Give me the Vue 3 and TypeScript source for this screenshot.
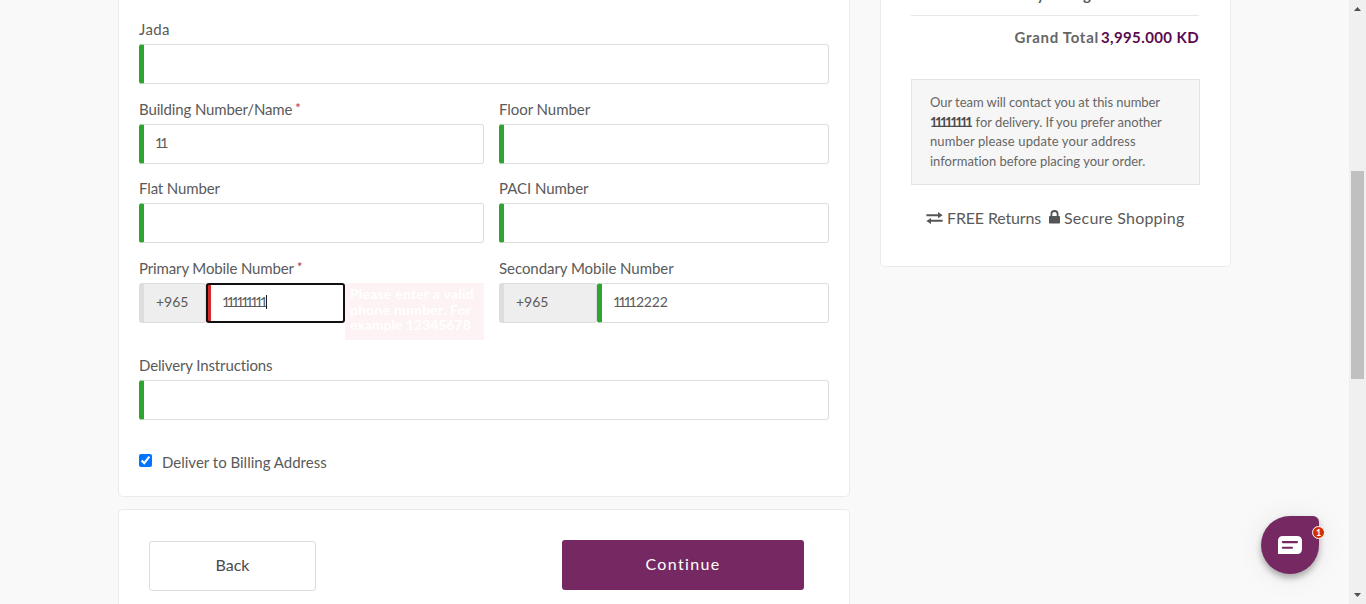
<script setup lang="ts">
interface Field {
  id: string
  label: string
  value: string
  required?: boolean
}

const rows: Field[][] = [
  [
    { id: 'building', label: 'Building Number/Name', value: '11', required: true },
    { id: 'floor', label: 'Floor Number', value: '' },
  ],
  [
    { id: 'flat', label: 'Flat Number', value: '' },
    { id: 'paci', label: 'PACI Number', value: '' },
  ],
]
</script>

<template>
  <div class="page">
    <main class="content">
      <div class="left">
        <section class="card form">
          <div class="field jada">
            <label class="label"><span class="t-jada">Jada</span></label>
            <div class="input"></div>
          </div>
          <div v-for="(row, i) in rows" :key="i" class="row" :class="'row-' + i">
            <div v-for="f in row" :key="f.id" class="field">
              <label class="label"><span :class="'t-' + f.id">{{ f.label }}</span><i v-if="f.required" class="req">*</i></label>
              <div class="input"><span class="ones">{{ f.value }}</span></div>
            </div>
          </div>
          <div class="row phones">
            <div class="field">
              <label class="label"><span class="t-primary">Primary Mobile Number</span><i class="req">*</i></label>
              <div class="phone">
                <div class="input prefix short">+965</div>
                <div class="input focused"><span class="ones many">111111111</span><span class="caret"></span></div>
                <div class="error">
                  <div class="e1">Please enter a valid</div>
                  <div class="e2">phone number. For</div>
                  <div class="e3">example 12345678</div>
                </div>
              </div>
            </div>
            <div class="field">
              <label class="label"><span class="t-secondary">Secondary Mobile Number</span></label>
              <div class="phone">
                <div class="input prefix long">+965</div>
                <div class="input second"><span class="ones">1111</span><span>2222</span></div>
              </div>
            </div>
          </div>
          <div class="field">
            <label class="label"><span class="t-delivery">Delivery Instructions</span></label>
            <div class="input"></div>
          </div>
          <label class="check">
            <input type="checkbox" checked />
            <span>Deliver to Billing Address</span>
          </label>
        </section>
        <section class="card actions">
          <button class="back">Back</button>
          <button class="continue">Continue</button>
        </section>
      </div>

      <aside class="card summary">
        <div class="charge">Delivery Charge</div>
        <div class="total"><span class="gt">Grand Total</span><span class="amount">3,995.000 KD</span></div>
        <div class="notice">
          <div class="n1">Our team will contact you at this number</div>
          <div class="n2"><b>11111111</b> for delivery. If you prefer another</div>
          <div class="n3">number please update your address</div>
          <div class="n4">information before placing your order.</div>
        </div>
        <div class="perks">
          <svg class="arrows" width="17" height="12" viewBox="0 0 17 12">
            <path d="M0.4 2.2H12V0L16.6 3.2 12 6.2V4.2H0.4ZM16.6 7.8H5V5.9L0.4 8.9 5 12V9.8H16.6Z" fill="#555" />
          </svg>
          <span class="free">FREE Returns</span>
          <svg class="lock" width="11" height="14" viewBox="0 0 11 14">
            <path d="M2.4 6.5V4.1a3.1 3.1 0 0 1 6.2 0V6.5" fill="none" stroke="#555" stroke-width="1.8" />
            <rect x="0" y="6" width="11" height="7.6" rx="0.8" fill="#555" />
          </svg>
          <span class="secure">Secure Shopping</span>
        </div>
      </aside>
    </main>

    <div class="scrollbar">
      <svg width="7" height="4" viewBox="0 0 7 4"><path d="M3.5 0L7 4H0Z" fill="#505050" /></svg>
      <div class="thumb"></div>
      <svg width="7" height="4" viewBox="0 0 7 4"><path d="M0 0H7L3.5 4Z" fill="#505050" /></svg>
    </div>

    <div class="chat">
      <svg width="24" height="18" viewBox="0 0 24 18">
        <path d="M5 0H19Q24 0 24 5V13Q24 18 19 18H0V5Q0 0 5 0Z" fill="#fff" />
        <path d="M4.8 6.1H19M4.8 11.7H14" stroke="#762863" stroke-width="2.1" stroke-linecap="round" />
      </svg>
      <span class="badge">1</span>
    </div>
  </div>
</template>

<style>
html,
body {
  margin: 0;
  overflow: hidden;
}
</style>

<style scoped>
* {
  box-sizing: border-box;
}
.page {
  position: relative;
  display: flex;
  justify-content: space-between;
  width: 1366px;
  height: 604px;
  overflow: hidden;
  background: #f9f9f9;
  color: #5a5a5a;
  font-family: Lato, 'Open Sans', sans-serif;
  font-size: 15px;
  font-variant-ligatures: none;
}
.content {
  display: flex;
  align-items: flex-start;
  gap: 30px;
  padding-left: 118px;
}
.left {
  display: flex;
  flex-direction: column;
  gap: 12px;
  width: 732px;
}
.card {
  background: #fff;
  border: 1px solid #ebebeb;
  border-radius: 5px;
}
.form {
  height: 497px;
  border-top: 0;
  border-radius: 0 0 5px 5px;
  padding: 19px 20px 0;
}
.jada {
  margin-bottom: 15px;
}
.row {
  display: grid;
  grid-template-columns: 345px 330px;
  column-gap: 15px;
}
.row-0 {
  margin-bottom: 14px;
}
.row-1 {
  margin-bottom: 15px;
}
.phones {
  height: 97px;
}
.label {
  display: flex;
  height: 20px;
  margin-bottom: 5px;
  line-height: 20px;
  white-space: nowrap;
}
.t-jada {
  letter-spacing: 0.4px;
}
.t-building,
.t-primary,
.t-flat,
.t-delivery {
  letter-spacing: -0.13px;
}
.t-floor,
.t-paci,
.t-secondary {
  letter-spacing: -0.05px;
}
.req {
  margin-left: 3px;
  color: #c9302c;
  font-style: normal;
  font-size: 13px;
  line-height: 19px;
}
.input {
  display: flex;
  align-items: center;
  height: 40px;
  padding: 0 0 3px 12px;
  border: 1px solid #ddd;
  border-left: 5px solid #30a430;
  border-radius: 3px;
  background: #fff;
  font-size: 14px;
}
.ones {
  margin-left: -1px;
  letter-spacing: -2.9px;
}
.ones + span {
  margin-left: 2px;
  letter-spacing: -0.2px;
}
.many {
  letter-spacing: -3.4px;
}
.phone {
  display: flex;
  align-items: flex-start;
}
.prefix {
  background: #eee;
  border-color: #ddd;
}
.short {
  width: 67px;
}
.long {
  width: 98px;
}
.focused {
  width: 139px;
  border-color: #fff #fff #fff #d32a2a;
  outline: 2px solid #101010;
  outline-offset: -2px;
}
.focused .caret {
  width: 1px;
  height: 14px;
  margin-left: 2px;
  background: #222;
}
.second {
  width: 232px;
}
.error {
  width: 139px;
  height: 57px;
  padding: 3px 5px;
  background: #fdf3f4;
  color: #fff;
  font-weight: 700;
  font-size: 14px;
  line-height: 15.5px;
  white-space: nowrap;
}
.e1,
.e2 {
  letter-spacing: 0.22px;
}
.check {
  display: flex;
  align-items: center;
  height: 20px;
  margin-top: 32px;
}
.check input {
  width: 13px;
  height: 13px;
  margin: -3px 10px 0 0;
}
.actions {
  display: flex;
  justify-content: space-between;
  height: 120px;
  padding: 30px 45px 0 30px;
}
button {
  font-family: inherit;
  font-size: 16px;
  border-radius: 3px;
}
.back {
  width: 167px;
  height: 50px;
  margin-top: 1px;
  padding: 0 0 3px;
  border: 1px solid #ddd;
  background: #fff;
  color: #4a4a4a;
}
.continue {
  width: 242px;
  height: 50px;
  padding: 0 0 3px;
  border: 0;
  background: #762863;
  color: #fff;
  letter-spacing: 1.35px;
}
.summary {
  width: 351px;
  height: 267px;
  padding: 0 30px;
  border-top: 0;
  border-radius: 0 0 5px 5px;
}
.charge {
  display: flex;
  justify-content: flex-end;
  align-items: flex-end;
  height: 16px;
  margin-right: 1px;
  padding: 0 99px 11px 0;
  border-bottom: 1px solid #e8e8e8;
  font-size: 15px;
  font-weight: 700;
  letter-spacing: 0.6px;
  line-height: 20px;
}
.total {
  display: flex;
  justify-content: flex-end;
  gap: 2px;
  height: 63px;
  margin-right: 1px;
  padding-top: 11px;
  font-size: 15px;
  line-height: 20px;
  font-weight: 700;
  color: #666;
}
.gt {
  letter-spacing: 0.7px;
}
.amount {
  color: #5b0a50;
  letter-spacing: 0.4px;
}
.notice {
  height: 106px;
  padding: 13px 18px;
  border: 1px solid #e4e4e4;
  background: #f6f6f6;
  color: #666;
  font-size: 13px;
  line-height: 19.6px;
  white-space: nowrap;
}
.n1 {
  letter-spacing: -0.06px;
}
.n3 {
  letter-spacing: 0.12px;
}
.notice b {
  margin-right: 2px;
  color: #4a4a4a;
  letter-spacing: -2.5px;
}
.n2 {
  letter-spacing: -0.05px;
}
.perks {
  display: flex;
  align-items: center;
  height: 24px;
  margin-top: 21px;
  padding-left: 15px;
  font-size: 16px;
  white-space: nowrap;
}
.perks span {
  margin-top: -1px;
}
.free {
  width: 94px;
  margin: 0 8px 0 4px;
  letter-spacing: -0.15px;
}
.lock {
  margin-top: -2px;
}
.secure {
  margin-left: 4px;
  letter-spacing: 0.22px;
}
.scrollbar {
  display: flex;
  flex-direction: column;
  align-items: center;
  width: 17px;
  padding: 7px 0;
  background: #f0f0f0;
}
.thumb {
  width: 13px;
  height: 208px;
  margin: 160px 0 214px;
  background: #c0c0c0;
}
.chat {
  position: absolute;
  left: 1261px;
  top: 516px;
  display: flex;
  align-items: center;
  justify-content: center;
  width: 58px;
  height: 58px;
  border-radius: 29px 6px 29px 29px;
  background: #762863;
  box-shadow: 0 4px 6px rgba(0, 0, 0, 0.3), 0 2px 30px rgba(0, 0, 0, 0.08);
}
.badge {
  position: absolute;
  left: 51px;
  top: 10px;
  width: 13px;
  height: 13px;
  border: 1px solid #fff;
  border-radius: 50%;
  background: #d33205;
  color: #fff;
  font-size: 9px;
  font-weight: 700;
  line-height: 11px;
  text-align: center;
}
</style>
